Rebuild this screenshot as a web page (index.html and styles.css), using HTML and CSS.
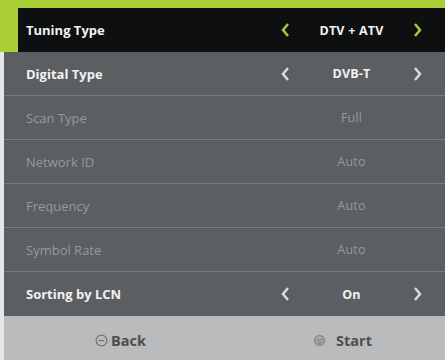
FILE: index.html
```html
<!DOCTYPE html>
<html lang="en">
<head>
    <meta charset="UTF-8">
    <meta name="viewport" content="width=device-width, initial-scale=1.0">
    <title>Channel Scan</title>
    <link rel="stylesheet" href="styles.css">
</head>
<body>
    <div class="top-bar"></div>

    <!-- Scan settings -->
    <div class="settings">
        <div class="row focused">
            <span class="label">Tuning Type</span>
            <div class="ctrl">
                <svg class="chev" viewBox="0 0 10 16"><path d="M8 2 L3 8 L8 14"/></svg>
                <span class="value">DTV + ATV</span>
                <svg class="chev" viewBox="0 0 10 16"><path d="M2 2 L7 8 L2 14"/></svg>
            </div>
        </div>
        <div class="row">
            <span class="label">Digital Type</span>
            <div class="ctrl">
                <svg class="chev" viewBox="0 0 10 16"><path d="M8 2 L3 8 L8 14"/></svg>
                <span class="value">DVB-T</span>
                <svg class="chev" viewBox="0 0 10 16"><path d="M2 2 L7 8 L2 14"/></svg>
            </div>
        </div>
        <div class="row disabled">
            <span class="label">Scan Type</span>
            <div class="ctrl"><span class="value">Full</span></div>
        </div>
        <div class="row disabled">
            <span class="label">Network ID</span>
            <div class="ctrl"><span class="value">Auto</span></div>
        </div>
        <div class="row disabled">
            <span class="label">Frequency</span>
            <div class="ctrl"><span class="value">Auto</span></div>
        </div>
        <div class="row disabled">
            <span class="label">Symbol Rate</span>
            <div class="ctrl"><span class="value">Auto</span></div>
        </div>
        <div class="row last">
            <span class="label">Sorting by LCN</span>
            <div class="ctrl">
                <svg class="chev" viewBox="0 0 10 16"><path d="M8 2 L3 8 L8 14"/></svg>
                <span class="value">On</span>
                <svg class="chev" viewBox="0 0 10 16"><path d="M2 2 L7 8 L2 14"/></svg>
            </div>
        </div>
    </div>

    <!-- Hint bar -->
    <div class="hints">
        <div class="hint back">
            <svg class="hint-icon" viewBox="0 0 14 14">
                <circle cx="7" cy="7" r="5.8" fill="none" stroke="#707274" stroke-width="1.3"/>
                <path d="M4 7 H10" stroke="#707274" stroke-width="1.3"/>
            </svg>
            <span>Back</span>
        </div>
        <div class="hint start">
            <svg class="hint-icon" viewBox="0 0 14 14">
                <circle cx="7" cy="7" r="6.2" fill="#8d8f91"/>
                <circle cx="7" cy="7" r="4.2" fill="#a9abad"/>
                <path d="M4.2 5.6 Q7 8.4 9.8 5.6 M4.2 8.6 Q7 11.2 9.8 8.6" fill="none" stroke="#7a7c7e" stroke-width="1.1"/>
            </svg>
            <span>Start</span>
        </div>
    </div>
</body>
</html>
```

FILE: styles.css
```css
body {
    margin: 0;
    width: 445px;
    height: 360px;
    overflow: hidden;
    background: #e4e5e5;
    font-family: 'Open Sans', 'Noto Sans', sans-serif;
}

.top-bar {
    height: 8px;
    background: #a9cf34;
}

.settings {
    background: #e4e5e5;
}

.row {
    display: flex;
    align-items: center;
    height: 43px;
    margin-left: 4px;
    padding-left: 22px;
    background: #5b5f61;
    border-bottom: 1px solid #797d80;
}

.row.focused {
    margin-left: 0;
    padding-left: 8px;
    height: 44px;
    border-left: 18px solid #a9cf34;
    border-bottom: none;
    background: #0e0f10;
}

.row.last {
    height: 44px;
    border-bottom: none;
}

.label {
    flex: 1;
    color: #f2f2f2;
    font-size: 13px;
    font-weight: 700;
}

.ctrl {
    display: flex;
    align-items: center;
    width: 143px;
    margin-right: 22px;
    height: 16px;
}

.value {
    flex: 1;
    text-align: center;
    color: #f2f2f2;
    font-size: 12.5px;
    font-weight: 700;
    letter-spacing: 0.2px;
}

.chev {
    width: 10px;
    height: 16px;
    fill: none;
    stroke: #d9dbdc;
    stroke-width: 2.5;
}

.focused .chev {
    stroke: #a9c83c;
}

.disabled .label,
.disabled .value {
    color: #959a9c;
    font-weight: 400;
}

.hints {
    display: flex;
    height: 44px;
    margin-left: 4px;
    background: #b9bbbc;
}

.hint {
    flex: 1;
    display: flex;
    align-items: center;
    justify-content: center;
    padding-top: 4px;
    color: #4d4f51;
    font-size: 14.5px;
    font-weight: 700;
}

.hint.back {
    gap: 3px;
    padding-left: 14px;
}

.hint.start {
    gap: 10px;
    padding-left: 17px;
}

.hint-icon {
    width: 13px;
    height: 13px;
}
```
